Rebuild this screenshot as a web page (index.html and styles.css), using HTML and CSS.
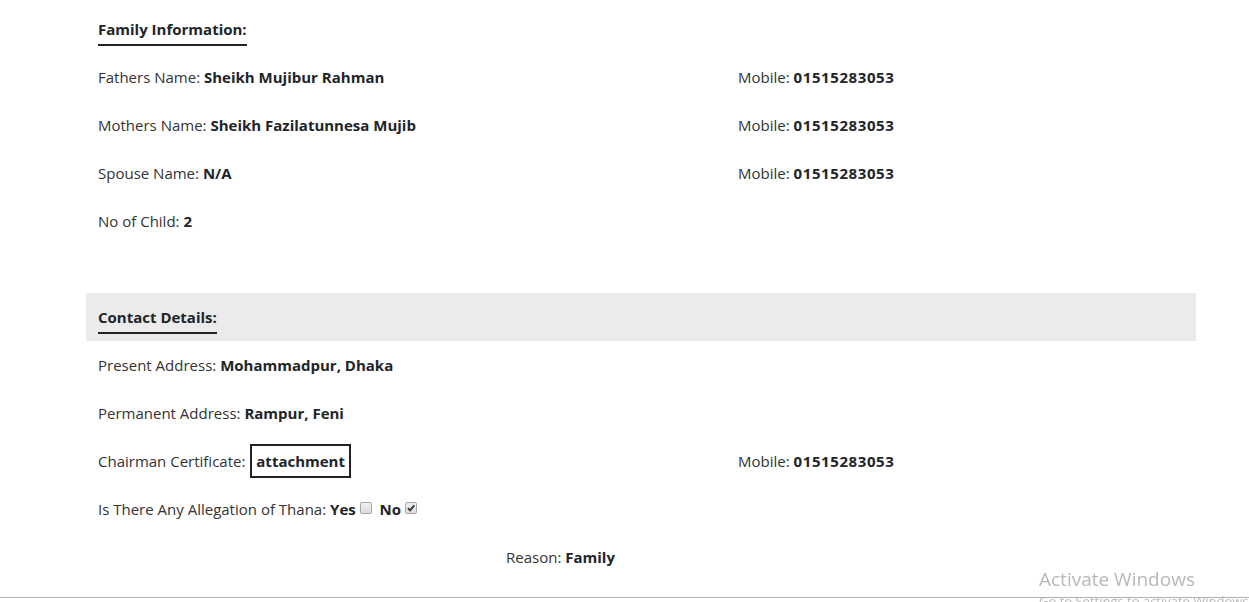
FILE: index.html
```html
<!DOCTYPE html>
<html lang="en">
<head>
<meta charset="utf-8">
<title>Profile</title>
<link rel="stylesheet" href="styles.css">
</head>
<body>
<main class="container">
  <section class="section">
    <div class="row head"><h3 class="title">Family Information:</h3></div>
    <div class="row split">
      <div class="cell">Fathers Name: <b>Sheikh Mujibur Rahman</b></div>
      <div class="cell">Mobile: <b class="num">01515283053</b></div>
    </div>
    <div class="row split">
      <div class="cell">Mothers Name: <b>Sheikh Fazilatunnesa Mujib</b></div>
      <div class="cell">Mobile: <b class="num">01515283053</b></div>
    </div>
    <div class="row split">
      <div class="cell">Spouse Name: <b>N/A</b></div>
      <div class="cell">Mobile: <b class="num">01515283053</b></div>
    </div>
    <div class="row">
      <div class="cell">No of Child: <b class="num">2</b></div>
    </div>
    <div class="row"></div>
  </section>
  <section class="section">
    <div class="row head shaded"><h3 class="title">Contact Details:</h3></div>
    <div class="row">
      <div class="cell">Present Address: <b>Mohammadpur, Dhaka</b></div>
    </div>
    <div class="row">
      <div class="cell">Permanent Address: <b>Rampur, Feni</b></div>
    </div>
    <div class="row split">
      <div class="cell">Chairman Certificate: <span class="attach">attachment</span></div>
      <div class="cell">Mobile: <b class="num">01515283053</b></div>
    </div>
    <div class="row">
      <div class="cell">Is There Any Allegation of Thana: <b>Yes</b><span class="box" role="checkbox" aria-checked="false"></span> <b>No</b><span class="box checked" role="checkbox" aria-checked="true"><svg viewBox="0 0 10 10" width="10" height="10"><path d="M2 5.2 L4.1 7.4 L8.2 2.4" fill="none" stroke="#333" stroke-width="1.8"/></svg></span></div>
    </div>
    <div class="row reason">
      <div class="cell">Reason: <b>Family</b></div>
    </div>
  </section>
</main>
<div class="watermark">
  <div class="wm-title">Activate Windows</div>
  <div class="wm-sub">Go to Settings to activate Windows.</div>
</div>
<div class="bottom-line"></div>
</body>
</html>
```
FILE: styles.css
```css
html, body {
  margin: 0;
  padding: 0;
  background: #fff;
}
body {
  font-family: "Open Sans", "Noto Sans", sans-serif;
  font-size: 15px;
  color: #333;
  overflow: hidden;
  height: 602px;
}
.container {
  width: 1110px;
  margin-left: 86px;
  padding-top: 5px;
}
.row {
  height: 48px;
  display: flex;
  align-items: center;
  padding-left: 12px;
}
.row.split {
  display: grid;
  grid-template-columns: 640px 1fr;
  align-items: center;
}
.row.shaded {
  background: #ebebeb;
}
.title {
  margin: 0;
  font-size: 15px;
  font-weight: 700;
  color: #212529;
  display: inline-block;
  padding-top: 6px;
  padding-bottom: 5px;
  border-bottom: 2px solid #212529;
  line-height: 20px;
}
.cell {
  line-height: 20px;
  white-space: nowrap;
}
b {
  color: #212529;
  font-weight: 700;
}
.num {
  letter-spacing: 0.6px;
}
.attach {
  display: inline-block;
  border: 2px solid #222;
  padding: 5px 4px;
  font-weight: 700;
  color: #212529;
  line-height: 20px;
  margin-left: 1px;
}
.box {
  display: inline-block;
  box-sizing: border-box;
  width: 12px;
  height: 12px;
  border: 1px solid #a8a8a8;
  border-radius: 2px;
  background: linear-gradient(#f0f0f0, #dcdcdc);
  margin: 0 4px 0 4px;
  vertical-align: 1px;
  position: relative;
}
.box svg {
  position: absolute;
  left: 0;
  top: 0;
}
.reason {
  padding-left: 420px;
}
.watermark {
  position: fixed;
  left: 1039px;
  top: 567px;
  color: #b8b8b8;
  font-family: "Open Sans", "Noto Sans", sans-serif;
  white-space: nowrap;
}
.wm-title {
  font-size: 19px;
  line-height: 25px;
}
.wm-sub {
  font-size: 13px;
  line-height: 18px;
}
.bottom-line {
  position: fixed;
  left: 0;
  right: 0;
  top: 597px;
  height: 1px;
  background: #b0b0b0;
}
```
